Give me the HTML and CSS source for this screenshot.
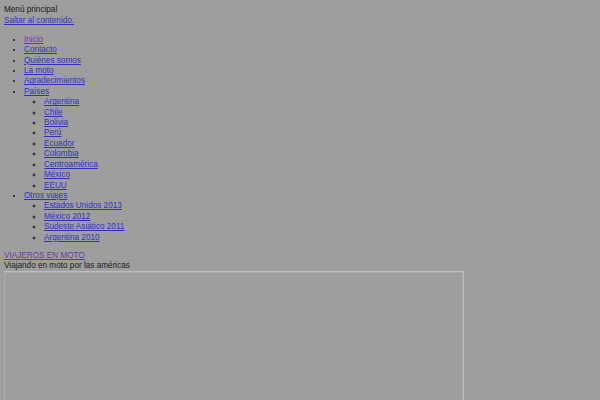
FILE: index.html
```html
<!DOCTYPE html>
<html lang="es">
<head>
<meta charset="utf-8">
<title>Viajeros en moto</title>
<link rel="stylesheet" href="styles.css">
</head>
<body>
<div class="menu-title">Menú principal</div>
<a class="skip" href="#content">Saltar al contenido.</a>
<ul class="nav">
  <li><a class="visited" href="#">Inicio</a></li>
  <li><a href="#">Contacto</a></li>
  <li><a href="#">Quiénes somos</a></li>
  <li><a href="#">La moto</a></li>
  <li><a href="#">Agradecimientos</a></li>
  <li><a href="#">Países</a>
    <ul class="sub">
      <li><a href="#">Argentina</a></li>
      <li><a href="#">Chile</a></li>
      <li><a href="#">Bolivia</a></li>
      <li><a href="#">Perú</a></li>
      <li><a href="#">Ecuador</a></li>
      <li><a href="#">Colombia</a></li>
      <li><a href="#">Centroamérica</a></li>
      <li><a href="#">México</a></li>
      <li><a href="#">EEUU</a></li>
    </ul>
  </li>
  <li><a href="#">Otros viajes</a>
    <ul class="sub">
      <li><a href="#">Estados Unidos 2013</a></li>
      <li><a href="#">México 2012</a></li>
      <li><a href="#">Sudeste Asiático 2011</a></li>
      <li><a href="#">Argentina 2010</a></li>
    </ul>
  </li>
</ul>
<a class="site-title visited" href="#">VIAJEROS EN MOTO</a>
<div class="tagline">Viajando en moto por las américas</div>
<div class="frame" id="content"></div>
</body>
</html>
```

FILE: styles.css
```css
html { background: #9e9e9e; }
body {
  margin: 5px 4px;
  font-family: "Liberation Sans", Arial, sans-serif;
  font-size: 8.2px;
  line-height: 10.4px;
  color: #1a1a1a;
  background: #9e9e9e;
}
a { color: #3030c8; }
a.visited { color: #6a3aa8; }
.menu-title, .skip, .site-title { display: block; }
.skip { margin-top: 1px; }
.nav {
  margin: 8px 0 8px 0;
  padding-left: 20px;
  list-style: disc;
}
.sub {
  margin: 0;
  padding-left: 20px;
  list-style: circle;
}
.frame {
  margin-left: -1px;
  margin-top: -1px;
  width: 459px;
  height: 200px;
  border: 1px solid #bdbdbd;
  box-shadow: inset 0 0 0 1px #aaaaaa;
}
```
